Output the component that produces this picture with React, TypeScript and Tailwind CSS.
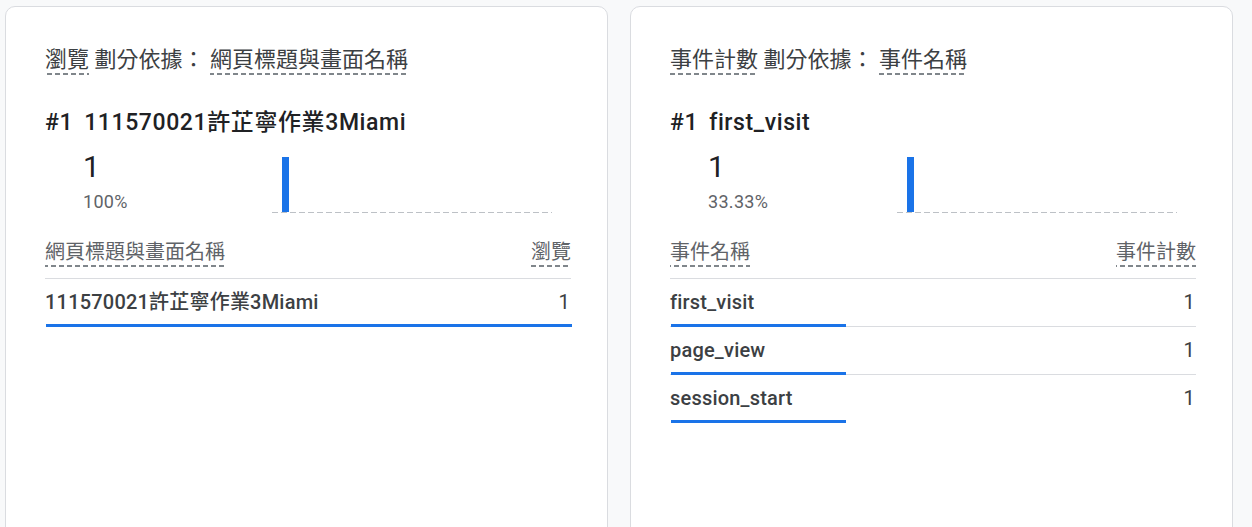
import React from "react";

type Row = { label: string; value: string; pct: number };

type CardProps = {
  metric: string;
  dimension: string;
  heading: string;
  value: string;
  pct: string;
  colLeft: string;
  colRight: string;
  rows: Row[];
};

const titleDash =
  "inline-block pb-[2px] bg-[linear-gradient(to_right,#80868b_5px,transparent_5px)] bg-[length:8px_2px] bg-repeat-x bg-bottom";
const headDash =
  "inline-block pb-[3px] bg-[linear-gradient(to_right,#80868b_5px,transparent_5px)] bg-[length:8px_2px] bg-repeat-x bg-bottom";

function Card({ metric, dimension, heading, value, pct, colLeft, colRight, rows }: CardProps) {
  return (
    <div className="w-[603px] h-[560px] shrink-0 bg-white border border-[#dadce0] rounded-[10px] pl-[39px] pr-[36px] pt-[40px]">
      <div className="text-[22px] leading-[26px] text-[#3c4043] whitespace-pre">
        <span className={titleDash}>{metric}</span>
        {" 劃分依據： "}
        <span className={titleDash}>{dimension}</span>
      </div>

      <div className="mt-[34px] text-[23px] leading-[28px] tracking-[0.6px] font-medium text-[#202124] whitespace-pre">
        <span className="mr-[11px]">#1</span>
        <span>{heading}</span>
      </div>

      <div className="flex mt-[12px]">
        <div className="w-[227px] pl-[38px]">
          <div className="text-[30px] leading-[36px] text-[#202124]">{value}</div>
          <div className="mt-[7px] text-[18px] leading-[20px] tracking-[0.3px] text-[#5f6368]">{pct}</div>
        </div>
        <div className="w-[280px] pt-[8px] flex flex-col">
          <div className="h-[55px] flex items-end pl-[10px]">
            <div className="w-[7px] h-full bg-[#1a73e8]" />
          </div>
          <div className="h-px bg-[linear-gradient(to_right,#bdc1c6_6px,transparent_6px)] bg-[length:9px_1px] bg-repeat-x" />
        </div>
      </div>

      <div className="mt-[27px] flex justify-between items-start border-b border-[#dadce0] pb-[11px] text-[20px] leading-[24px] text-[#5f6368]">
        <span className={headDash}>{colLeft}</span>
        <span className={headDash}>{colRight}</span>
      </div>

      {rows.map((r, i) => (
        <div key={r.label}>
          <div className="flex justify-between items-center h-[45px] text-[20px] leading-[24px] tracking-[0.2px] text-[#3c4043]">
            <span className="font-medium">{r.label}</span>
            <span className="pr-[1px]">{r.value}</span>
          </div>
          <div className="relative h-[3px]">
            {i < rows.length - 1 && (
              <div className="absolute left-0 right-0 bottom-0 h-px bg-[#dadce0]" />
            )}
            <div
              className="absolute left-[1px] top-0 h-[3px] bg-[#1a73e8]"
              style={{ width: `${(526 * r.pct) / 100}px` }}
            />
          </div>
        </div>
      ))}
    </div>
  );
}

export default function App() {
  return (
    <div className="w-[1252px] h-[527px] overflow-hidden bg-[#f8f9fa] flex gap-[22px] pl-[5px] pt-[6px] font-[Roboto,'Noto_Sans_CJK_TC',sans-serif]">
      <Card
        metric="瀏覽"
        dimension="網頁標題與畫面名稱"
        heading="111570021許芷寧作業3Miami"
        value="1"
        pct="100%"
        colLeft="網頁標題與畫面名稱"
        colRight="瀏覽"
        rows={[{ label: "111570021許芷寧作業3Miami", value: "1", pct: 100 }]}
      />
      <Card
        metric="事件計數"
        dimension="事件名稱"
        heading="first_visit"
        value="1"
        pct="33.33%"
        colLeft="事件名稱"
        colRight="事件計數"
        rows={[
          { label: "first_visit", value: "1", pct: 33.33 },
          { label: "page_view", value: "1", pct: 33.33 },
          { label: "session_start", value: "1", pct: 33.33 },
        ]}
      />
    </div>
  );
}
